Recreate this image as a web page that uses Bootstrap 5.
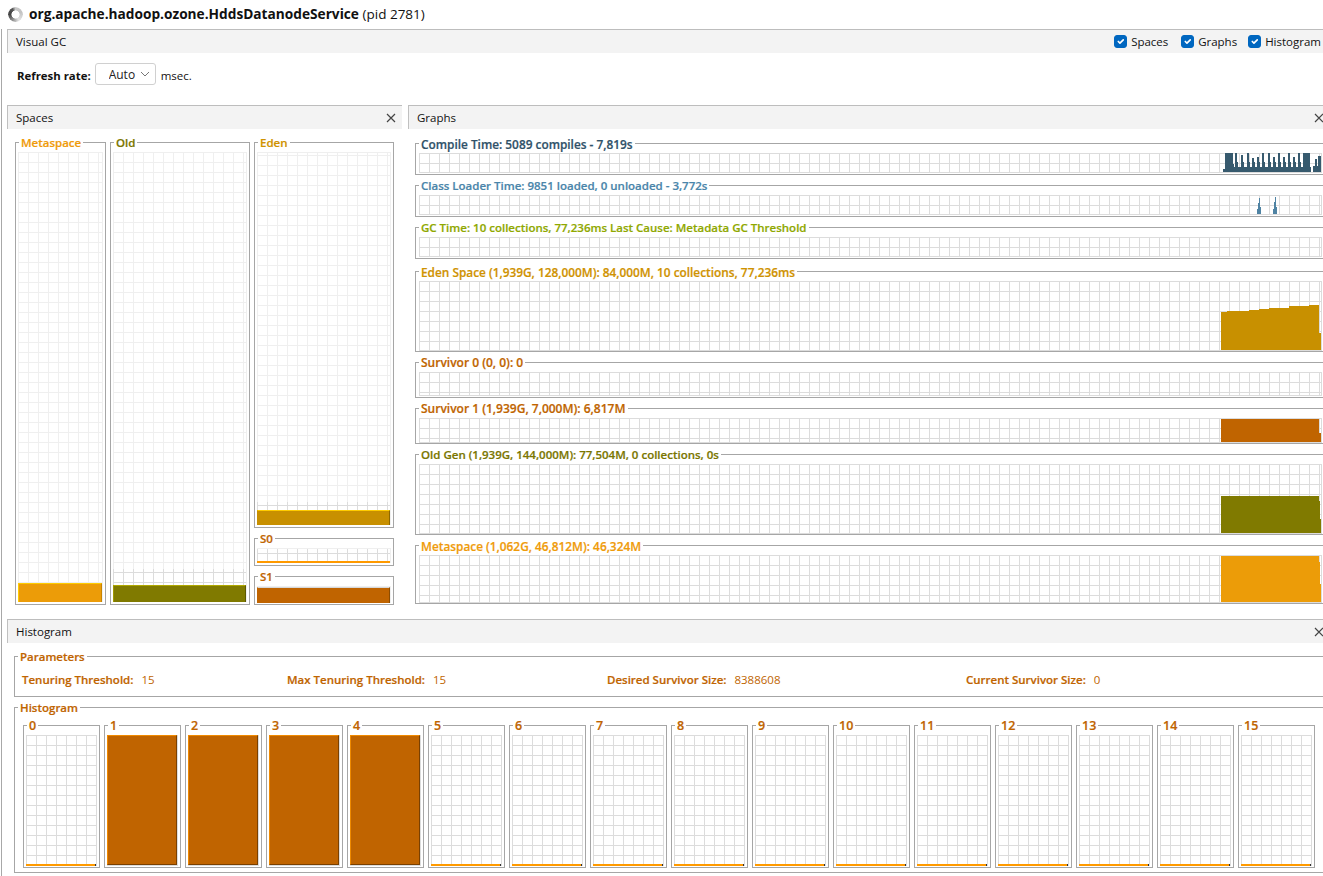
<!DOCTYPE html>
<html lang="en">
<head>
  <meta charset="UTF-8">
  <title>Visual GC</title>
  <link rel="stylesheet" href="https://cdn.jsdelivr.net/npm/bootstrap@5.3.0/dist/css/bootstrap.min.css">
  <style>
    html, body { height: 876px; overflow: hidden; }
    body {
      background: #fff;
      color: #111;
      font-family: "Open Sans", "Liberation Sans", sans-serif;
      font-size: 11.5px;
      width: 1323px;
    }
    .title-row { height: 29px; padding-left: 8px; gap: 6px; font-size: 13.7px; }
    .title-row b { font-weight: 700; }
    .title-row span { font-size: 13.5px; }
    .busy-ring {
      width: 15px; height: 15px; border-radius: 50%;
      background: conic-gradient(#c8c8c8, #c4c4c4 70deg, #e4e4e4 150deg, #999 200deg, #444 270deg, #555 330deg, #c8c8c8);
      -webkit-mask: radial-gradient(circle, transparent 3.8px, #000 4.3px);
      mask: radial-gradient(circle, transparent 3.8px, #000 4.3px);
    }
    .shell { width: 1329px; margin-left: 1px; border-left: 1px solid #a8a8a8; padding-left: 5px; height: 847px; }
    .pane-head {
      height: 24px; padding: 0 6px 0 8px;
      background: #f3f3f3; border-top: 1px solid #bdbdbd; border-left: 1px solid #c0c0c0;
    }
    .pane-head svg { display: block; }
    .check-row { gap: 13px; margin-right: 3px; }
    .check-row .form-check { margin: 0; padding: 0; min-height: 0; gap: 4px; width: 54px; white-space: nowrap; }
    .check-row .form-check:last-child { width: auto; }
    .check-row .form-check-input {
      float: none; margin: 0; width: 13px; height: 13px; border-radius: 3px; flex: 0 0 auto;
      background-color: #0067c0; border-color: #0067c0;
    }
    .refresh-row { height: 52px; padding: 10px 0 0 10px; gap: 4px; }
    .refresh-row b { font-weight: 700; font-size: 11.4px; }
    .refresh-row span { margin-left: 1px; }
    .rate-select {
      width: 61px; height: 22px; min-height: 0; padding: 2px 0 0 13px;
      font-size: 12px; border-radius: 3px; border-color: #d0d0d0; color: #222;
      background-position: right 4px center; background-size: 12px 10px;
      background-image: url("data:image/svg+xml,%3csvg xmlns='http://www.w3.org/2000/svg' viewBox='0 0 12 10'%3e%3cpath fill='none' stroke='%23777' d='M2 3l4 4 4-4'/%3e%3c/svg%3e");
    }
    .pane-row { height: 514px; gap: 6px; }
    .pane-spaces { width: 395px; }
    .pane-graphs { width: 922px; overflow: hidden; }
    .spaces-body { padding: 13px 0 0 8px; gap: 4px; }
    .graphs-body { padding: 14px 0 0 7px; }
    .gbox {
      position: relative; border: 1px solid #a6a6a6;
      padding: 9px 2px 2px 2px; display: flex; flex-direction: column;
    }
    .gbox-label {
      position: absolute; top: -8px; left: 3px; padding: 0 2px;
      background: #fff; line-height: 16px; font-weight: 600; font-size: 11.5px; white-space: nowrap;
      -webkit-text-stroke: .2px;
    }
    .plot {
      flex: 1 1 auto; display: flex; flex-direction: column; justify-content: flex-end;
      background-image: linear-gradient(to right, #efefef 1px, transparent 1px), linear-gradient(to bottom, #efefef 1px, transparent 1px);
      background-size: 10px 10px;
      background-position: left bottom;
      border-right: 1px solid #efefef; border-top: 1px solid #efefef;
    }
    .plot-cap {
      background-image: linear-gradient(to right, #dcdcdc 1px, transparent 1px), linear-gradient(to bottom, #dcdcdc 1px, transparent 1px);
      background-size: 10px 10px;
      background-position: left bottom;
      display: flex; flex-direction: column; justify-content: flex-end;
    }
    .plot-full { flex: 1 1 auto; }
    .fill { border-style: solid; border-width: 1px 1px 0 1px; }
    .fill-meta { background: #ec9c08; border-color: #ffcc00 #c88400 #ec9c08 #ffcc00; }
    .fill-old { background: #807a00; border-color: #b0a800 #5c5800 #807a00 #a09800; }
    .fill-eden { background: #c89000; border-color: #ffcc00 #8c6800 #c89000 #c89000; }
    .fill-surv { background: #c06400; border-color: #d8d8d8 #8c4c00 #c06400 #c06400; }
    .line-surv { height: 2px; background: #ff9a00; }
    .col-meta { width: 91px; height: 463px; }
    .col-old { width: 140px; height: 463px; }
    .col-eden { width: 140px; gap: 10px; }
    .h-eden { height: 386px; }
    .h-s0 { height: 28px; }
    .h-s1 { height: 29px; }
    .c-compile { color: #2f5168; }
    .c-class { color: #4a85aa; }
    .c-gc { color: #8fa800; }
    .c-eden { color: #cf9200; }
    .c-surv { color: #c06400; }
    .c-old { color: #7a7600; }
    .c-meta { color: #ef9b0a; }
    .gbox-graph .c-compile, .gbox-graph .c-eden, .gbox-graph .c-meta { font-size: 11.85px; }
    .gbox-graph .c-surv { font-size: 12px; }
    .gbox-graph { width: 940px; padding: 9px 0 1px 3px; margin-bottom: 10px; }
    .gbox-graph.gap-eden { margin-bottom: 12px; }
    .g-small { height: 32px; }
    .g-surv { height: 36px; }
    .g-big { height: 81px; }
    .g-meta { height: 59px; }
    .chart {
      width: 903px; flex: 1 1 auto;
      background-image: linear-gradient(to right, #dcdcdc 1px, transparent 1px), linear-gradient(to bottom, #dcdcdc 1px, transparent 1px);
      background-size: 10px 10px;
      border-right: 1px solid #dcdcdc; border-bottom: 1px solid #dcdcdc;
    }
    .chart svg { display: block; overflow: hidden; }
    .hist-body { padding: 13px 0 0 7px; }
    .gbox-params { width: 1340px; height: 41px; margin-bottom: 10px; padding: 14px 0 0 7px; }
    .params-row { display: grid; grid-template-columns: 265px 320px 359px auto; color: #c06400; }
    .params-row b { font-weight: 600; margin-right: 8px; -webkit-text-stroke: .2px; }
    .gbox-hist { width: 1340px; height: 166px; padding: 17px 0 0 8px; flex-direction: row; gap: 4px; }
    .hbin { width: 77px; height: 143px; padding: 9px 2px 1px 2px; flex: 0 0 auto; }
    .hbin .gbox-label { left: 3px; color: #c06400; font-size: 12.5px; }
    .hgrid {
      flex: 1 1 auto; display: flex; flex-direction: column; justify-content: flex-end;
      background-image: linear-gradient(to right, #dcdcdc 1px, transparent 1px), linear-gradient(to bottom, #dcdcdc 1px, transparent 1px);
      background-size: 10px 10px;
      border-right: 1px solid #dcdcdc;
    }
    .hfill { background: #c06400; flex: 1 1 auto; margin-bottom: 1px; border-style: solid; border-width: 1px; border-color: #f08a00 #7a4000 #7a4000 #f08a00; }
    .hline { height: 2px; background: #ff9a00; border-right: 1px solid #333; }
  </style>
</head>
<body>
  <div class="title-row d-flex align-items-center">
    <div class="busy-ring"></div>
    <div><b>org.apache.hadoop.ozone.HddsDatanodeService</b> <span>(pid 2781)</span></div>
  </div>

  <div class="shell">
    <div class="pane-top">
      <div class="pane-head d-flex align-items-center justify-content-between">
        <span>Visual GC</span>
        <div class="check-row d-flex">
          <label class="form-check d-flex align-items-center"><input class="form-check-input" type="checkbox" checked>Spaces</label>
          <label class="form-check d-flex align-items-center"><input class="form-check-input" type="checkbox" checked>Graphs</label>
          <label class="form-check d-flex align-items-center"><input class="form-check-input" type="checkbox" checked>Histogram</label>
        </div>
      </div>
      <div class="refresh-row d-flex align-items-start">
        <b class="mt-1">Refresh rate:</b>
        <select class="form-select rate-select"><option>Auto</option></select>
        <span class="mt-1">msec.</span>
      </div>
    </div>

    <div class="pane-row d-flex">
      <!-- spaces -->
      <div class="pane-spaces">
        <div class="pane-head d-flex align-items-center justify-content-between">
          <span>Spaces</span>
          <svg width="10" height="10" viewBox="0 0 10 10"><path d="M1 1l8 8M9 1l-8 8" stroke="#444" stroke-width="1.2" fill="none"/></svg>
        </div>
        <div class="spaces-body d-flex">
          <div class="gbox col-meta">
            <span class="gbox-label c-meta">Metaspace</span>
            <div class="plot"><div class="plot-cap"><div class="fill fill-meta" style="height:19px"></div></div></div>
          </div>
          <div class="gbox col-old">
            <span class="gbox-label c-old">Old</span>
            <div class="plot"><div class="plot-cap" style="height:33px"><div class="fill fill-old" style="height:17px"></div></div></div>
          </div>
          <div class="col-eden d-flex flex-column">
            <div class="gbox h-eden">
              <span class="gbox-label c-eden">Eden</span>
              <div class="plot"><div class="plot-cap" style="height:23px"><div class="fill fill-eden" style="height:15px"></div></div></div>
            </div>
            <div class="gbox h-s0">
              <span class="gbox-label c-surv">S0</span>
              <div class="plot"><div class="plot-cap plot-full"><div class="line-surv"></div></div></div>
            </div>
            <div class="gbox h-s1">
              <span class="gbox-label c-surv">S1</span>
              <div class="plot"><div class="plot-cap plot-full"><div class="fill fill-surv" style="height:16px"></div></div></div>
            </div>
          </div>
        </div>
      </div>

      <!-- graphs -->
      <div class="pane-graphs">
        <div class="pane-head d-flex align-items-center justify-content-between">
          <span>Graphs</span>
          <svg width="10" height="10" viewBox="0 0 10 10"><path d="M1 1l8 8M9 1l-8 8" stroke="#444" stroke-width="1.2" fill="none"/></svg>
        </div>
        <div class="graphs-body">
          <div class="gbox gbox-graph g-small">
            <span class="gbox-label c-compile">Compile Time: 5089 compiles - 7,819s</span>
            <div class="chart"><svg width="902" height="19"><path id="compile-path" fill="#375a6e" d=""/></svg></div>
          </div>
          <div class="gbox gbox-graph g-small">
            <span class="gbox-label c-class">Class Loader Time: 9851 loaded, 0 unloaded - 3,772s</span>
            <div class="chart"><svg width="902" height="19"><path fill="#4f83a3" d="M838 19V14H839V8H840V3H841V12H842V19ZM854 19V14H855V7H856V2H857V12H858V19Z"/></svg></div>
          </div>
          <div class="gbox gbox-graph g-small gap-eden">
            <span class="gbox-label c-gc">GC Time: 10 collections, 77,236ms Last Cause: Metadata GC Threshold</span>
            <div class="chart"></div>
          </div>
          <div class="gbox gbox-graph g-big">
            <span class="gbox-label c-eden">Eden Space (1,939G, 128,000M): 84,000M, 10 collections, 77,236ms</span>
            <div class="chart"><svg width="902" height="69"><path fill="#c89000" d="M802 69V31H808V30H830V29H840V28H850V27H870V25H890V24H900V52H902V69Z"/></svg></div>
          </div>
          <div class="gbox gbox-graph g-surv">
            <span class="gbox-label c-surv">Survivor 0 (0, 0): 0</span>
            <div class="chart"></div>
          </div>
          <div class="gbox gbox-graph g-surv">
            <span class="gbox-label c-surv">Survivor 1 (1,939G, 7,000M): 6,817M</span>
            <div class="chart"><svg width="902" height="24"><path fill="#c06400" d="M802 24V1H900V15H902V24Z"/></svg></div>
          </div>
          <div class="gbox gbox-graph g-big">
            <span class="gbox-label c-old">Old Gen (1,939G, 144,000M): 77,504M, 0 collections, 0s</span>
            <div class="chart"><svg width="902" height="69"><path fill="#807a00" d="M802 69V32H900V37H901V55H902V69Z"/></svg></div>
          </div>
          <div class="gbox gbox-graph g-meta">
            <span class="gbox-label c-meta">Metaspace (1,062G, 46,812M): 46,324M</span>
            <div class="chart"><svg width="902" height="47"><path fill="#ec9c08" d="M802 47V1H900V7H901V29H902V47Z"/></svg></div>
          </div>
        </div>
      </div>
    </div>

    <!-- histogram -->
    <div class="pane-bottom">
      <div class="pane-head d-flex align-items-center justify-content-between">
        <span>Histogram</span>
        <svg width="10" height="10" viewBox="0 0 10 10"><path d="M1 1l8 8M9 1l-8 8" stroke="#444" stroke-width="1.2" fill="none"/></svg>
      </div>
      <div class="hist-body">
        <div class="gbox gbox-params">
          <span class="gbox-label c-surv">Parameters</span>
          <div class="params-row">
            <div><b>Tenuring Threshold:</b>15</div>
            <div><b>Max Tenuring Threshold:</b>15</div>
            <div><b>Desired Survivor Size:</b>8388608</div>
            <div><b>Current Survivor Size:</b>0</div>
          </div>
        </div>
        <div class="gbox gbox-hist">
          <span class="gbox-label c-surv">Histogram</span>
          <div class="gbox hbin"><span class="gbox-label">0</span><div class="hgrid"><div class="hline"></div></div></div>
          <div class="gbox hbin"><span class="gbox-label">1</span><div class="hgrid"><div class="hfill"></div></div></div>
          <div class="gbox hbin"><span class="gbox-label">2</span><div class="hgrid"><div class="hfill"></div></div></div>
          <div class="gbox hbin"><span class="gbox-label">3</span><div class="hgrid"><div class="hfill"></div></div></div>
          <div class="gbox hbin"><span class="gbox-label">4</span><div class="hgrid"><div class="hfill"></div></div></div>
          <div class="gbox hbin"><span class="gbox-label">5</span><div class="hgrid"><div class="hline"></div></div></div>
          <div class="gbox hbin"><span class="gbox-label">6</span><div class="hgrid"><div class="hline"></div></div></div>
          <div class="gbox hbin"><span class="gbox-label">7</span><div class="hgrid"><div class="hline"></div></div></div>
          <div class="gbox hbin"><span class="gbox-label">8</span><div class="hgrid"><div class="hline"></div></div></div>
          <div class="gbox hbin"><span class="gbox-label">9</span><div class="hgrid"><div class="hline"></div></div></div>
          <div class="gbox hbin"><span class="gbox-label">10</span><div class="hgrid"><div class="hline"></div></div></div>
          <div class="gbox hbin"><span class="gbox-label">11</span><div class="hgrid"><div class="hline"></div></div></div>
          <div class="gbox hbin"><span class="gbox-label">12</span><div class="hgrid"><div class="hline"></div></div></div>
          <div class="gbox hbin"><span class="gbox-label">13</span><div class="hgrid"><div class="hline"></div></div></div>
          <div class="gbox hbin"><span class="gbox-label">14</span><div class="hgrid"><div class="hline"></div></div></div>
          <div class="gbox hbin"><span class="gbox-label">15</span><div class="hgrid"><div class="hline"></div></div></div>
        </div>
      </div>
    </div>
  </div>

  <script src="https://cdn.jsdelivr.net/npm/bootstrap@5.3.0/dist/js/bootstrap.bundle.min.js"></script>
  <script>
    // compile time spikes: [x, top] inside the chart
    const spikes = [[816,0],[822,2],[828,0],[833,5],[838,4],[843,0],[849,0],[854,4],[859,0],[864,4],[869,0],[874,4],[879,0]];
    let d = 'M804 19V16H806V0H814V11H815V';
    spikes.forEach(([x, top]) => {
      d += `14H${x}V${top}H${x + 2}V9H${x + 3}V`;
    });
    // wide block, a gap, then the last two spikes
    d += '14H884V0H891V14H892V19H894V13H896V6H898V13H899V3H902V19H804Z';
    document.getElementById('compile-path').setAttribute('d', d);
  </script>
</body>
</html>
